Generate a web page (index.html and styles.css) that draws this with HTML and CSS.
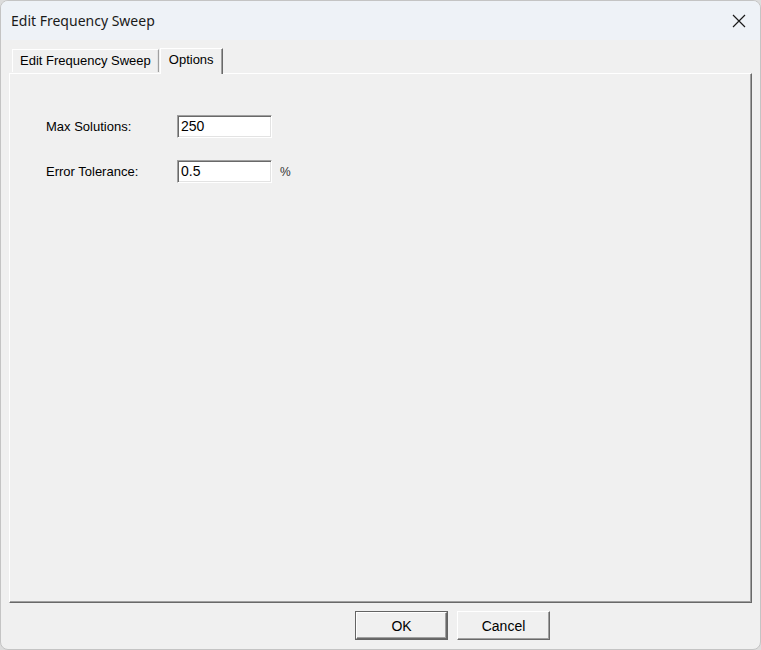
FILE: index.html
```html
<!DOCTYPE html>
<html>
<head>
<meta charset="utf-8">
<link rel="stylesheet" href="styles.css">
</head>
<body>
<div class="window">
  <div class="titlebar">
    <span class="title">Edit Frequency Sweep</span>
    <span class="close"><svg width="14" height="14" viewBox="0 0 14 14"><path d="M1 1 L13 13 M13 1 L1 13" stroke="#1a1a1a" stroke-width="1.2" fill="none"/></svg></span>
  </div>
  <div class="client">
    <div class="tabs">
      <div class="tab">Edit Frequency Sweep</div>
      <div class="tab selected">Options</div>
    </div>
    <div class="panel">
      <div class="row">
        <span class="label">Max Solutions:</span>
        <span class="input">250</span>
      </div>
      <div class="row">
        <span class="label">Error Tolerance:</span>
        <span class="input">0.5</span>
        <span class="unit">%</span>
      </div>
    </div>
    <div class="buttons">
      <div class="btn default"><span class="btn-inner">OK</span></div>
      <div class="btn"><span class="btn-inner">Cancel</span></div>
    </div>
  </div>
</div>
</body>
</html>
```
FILE: styles.css
```css
html, body {
  margin: 0;
  padding: 0;
  background: #dcdcdc;
}
.window {
  width: 761px;
  height: 650px;
  box-sizing: border-box;
  border: 1px solid #c4c4c4;
  border-radius: 8px;
  overflow: hidden;
  background: #f0f0f0;
  display: flex;
  flex-direction: column;
}
.titlebar {
  height: 39px;
  background: #eef2f7;
  display: flex;
  align-items: center;
  justify-content: space-between;
  padding: 0 0 0 10px;
  flex: none;
}
.title {
  font-family: "Noto Sans", "Open Sans", sans-serif;
  font-size: 14px;
  color: #1a1a1a;
  margin-top: -1px;
}
.close {
  width: 46px;
  height: 39px;
  display: flex;
  align-items: center;
  justify-content: center;
}
.close svg { display: block; margin-left: 4px; }
.client {
  flex: 1;
  display: flex;
  flex-direction: column;
  padding: 8px 8px 0 8px;
  font-family: "Liberation Sans", Arial, sans-serif;
  font-size: 13px;
  color: #000;
}
.tabs {
  display: flex;
  align-items: flex-end;
  height: 25px;
  padding-left: 3px;
  position: relative;
  z-index: 2;
}
.tab {
  height: 22px;
  line-height: 22px;
  padding: 0 7px;
  border-top: 1px solid #ffffff;
  border-left: 1px solid #ffffff;
  border-right: 1px solid #a0a0a0;
  box-shadow: inset -1px 0 0 #e3e3e3;
  background: #f0f0f0;
  margin-bottom: 1px;
}
.tab.selected {
  height: 25px;
  line-height: 22px;
  margin-bottom: -1px;
  margin-left: 1px;
  padding: 0 8px;
  border-right: 1px solid #696969;
  box-shadow: inset -1px 0 0 #a0a0a0;
}
.panel {
  height: 530px;
  box-sizing: border-box;
  border-top: 1px solid #ffffff;
  border-left: 1px solid #ffffff;
  border-right: 1px solid #696969;
  border-bottom: 1px solid #696969;
  box-shadow: inset -1px -1px 0 #a0a0a0;
  padding: 41px 0 0 36px;
  display: flex;
  flex-direction: column;
  gap: 22px;
}
.row {
  display: flex;
  align-items: center;
  height: 23px;
}
.label {
  width: 131px;
  flex: none;
}
.input {
  width: 95px;
  height: 23px;
  box-sizing: border-box;
  background: #ffffff;
  border-top: 1px solid #a0a0a0;
  border-left: 1px solid #a0a0a0;
  border-right: 1px solid #ffffff;
  border-bottom: 1px solid #ffffff;
  box-shadow: inset 1px 1px 0 #696969, inset -1px -1px 0 #e3e3e3;
  padding: 0 3px;
  line-height: 21px;
  font-size: 14px;
}
.unit {
  margin-left: 8px;
  font-size: 12px;
  color: #333;
}
.buttons {
  display: flex;
  gap: 9px;
  padding: 8px 0 0 346px;
}
.btn {
  width: 93px;
  height: 29px;
  box-sizing: border-box;
  border-top: 1px solid #ffffff;
  border-left: 1px solid #ffffff;
  border-right: 1px solid #696969;
  border-bottom: 1px solid #696969;
  box-shadow: inset -1px -1px 0 #a0a0a0;
  display: flex;
}
.btn.default {
  border: 1px solid #646464;
  box-shadow: none;
}
.btn-inner {
  flex: 1;
  display: flex;
  align-items: center;
  justify-content: center;
  font-size: 14px;
}
.btn.default .btn-inner {
  border-top: 1px solid #ffffff;
  border-left: 1px solid #ffffff;
  border-right: 1px solid #696969;
  border-bottom: 1px solid #696969;
  box-shadow: inset -1px -1px 0 #a0a0a0;
}
```
